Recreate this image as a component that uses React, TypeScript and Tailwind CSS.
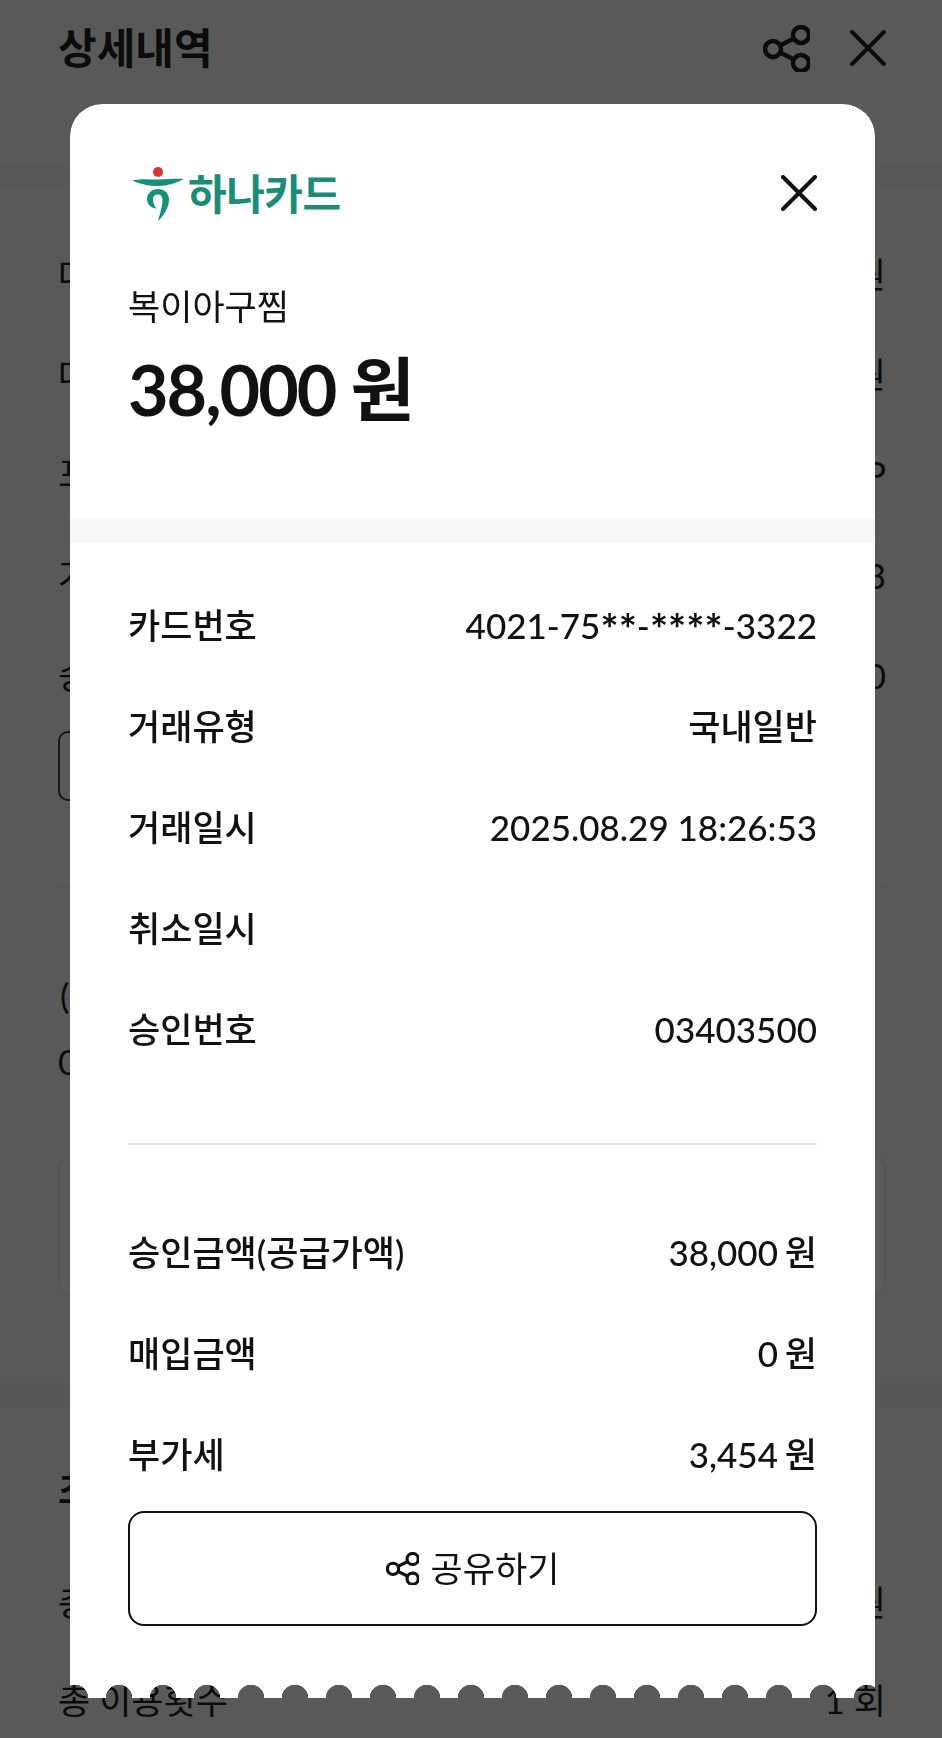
const detailRows = [
  { label: '카드번호', value: <>4021-75<span className="font-['Inter',sans-serif]">**</span>-<span className="font-['Inter',sans-serif]">****</span>-3322</> },
  { label: '거래유형', value: '국내일반' },
  { label: '거래일시', value: '2025.08.29 18:26:53' },
  { label: '취소일시', value: '' },
  { label: '승인번호', value: '03403500' },
];

const amountRows = [
  { label: '승인금액(공급가액)', value: '38,000 원' },
  { label: '매입금액', value: '0 원' },
  { label: '부가세', value: '3,454 원' },
];

const backRows = [
  { label: '대금', value: '38,000 원', className: 'h-[103px]' },
  { label: '대금', value: '0 원', className: 'h-[97px]' },
  { label: '포인트', value: '0 P', className: 'h-[100px]' },
  { label: '거래일시', value: '2025.08.29 18:26:53', className: 'h-[105px]' },
  { label: '승인번호', value: '03403500', className: 'h-[95px]' },
];

function ShareIcon({ className }: { className: string }) {
  return (
    <svg viewBox="0 0 47 47" fill="none" stroke="currentColor" strokeWidth="4.500" className={className}>
      <circle cx="10" cy="24" r="8" />
      <circle cx="38" cy="10" r="8" />
      <circle cx="38" cy="38" r="8" />
      <path d="M17 20.500 31 13.500M17 27.500 31 34.500" />
    </svg>
  );
}

function CloseIcon({ className }: { className: string }) {
  return (
    <svg viewBox="0 0 36 36" fill="none" stroke="currentColor" strokeWidth="4" strokeLinecap="round" className={className}>
      <path d="M2 2 34 34M34 2 2 34" />
    </svg>
  );
}

function HanaLogo() {
  return (
    <div className="flex items-center gap-[4px]">
      <svg viewBox="0 0 52 56" className="h-[56px] w-[52px]">
        <circle cx="26" cy="6" r="5" fill="#e0322d" />
        <path d="M0 14.500C9 12.500 18 13.500 26 13.500 35 13.500 43 12.500 52 13 44 17 36 20 26 20 16 20 8 18 0 14.500Z" fill="#15907a" />
        <path
          d="M26 23C19.500 23 15 27.500 15 33 15 38.500 19.500 42.500 24.500 42.500 22.500 40.500 21 37 21 33.500 21 30 23 28.500 26 28.500 29 28.500 30.500 31 30.500 34 30.500 39 28.500 46 26 55 32.500 49 37 41 37 33.500 37 27.500 32.500 23 26 23Z"
          fill="#15907a"
        />
      </svg>
      <span className="text-[42px] leading-none font-semibold tracking-[-0.5px] text-[#1a8c78]">하나카드</span>
    </div>
  );
}

export default function App() {
  return (
    <div className="relative h-[1738px] overflow-hidden bg-[#595959] font-['Lato','Noto_Sans_CJK_KR',sans-serif] text-[35px] text-[#0b0b0b]">
      {/* 뒤쪽 상세내역 화면 */}
      <header className="flex h-[96px] items-center justify-between pr-[56px] pl-[58px]">
        <h1 className="text-[42px] leading-none font-bold">상세내역</h1>
        <div className="flex items-center gap-[40px]">
          <ShareIcon className="h-[47px] w-[47px]" />
          <CloseIcon className="h-[36px] w-[36px]" />
        </div>
      </header>
      <div className="mt-[67px] h-[24px] bg-[#575757]" />

      <div className="pr-[56px] pl-[58px] pt-[36px]">
        {backRows.map((row) => (
          <div key={row.value} className={`flex items-center justify-between ${row.className}`}>
            <span>{row.label}</span>
            <span>{row.value}</span>
          </div>
        ))}
        <div className="mt-[8px] h-[70px] w-[400px] rounded-[10px] border-2 border-[#161616]" />
        <div className="mt-[86px] h-[1px] bg-[#535353]" />
        <p className="mt-[80px] pl-[2px] leading-[54px]">(주)복이아구찜</p>
        <p className="mt-[12px] leading-[54px]">02-000-0000</p>
        <div className="mt-[67px] h-[141px] rounded-[14px] border-2 border-[#555555] bg-[#5b5b5b]" />
      </div>

      <div className="mt-[87px] h-[24px] bg-[#565656]" />

      <div className="pr-[56px] pl-[58px]">
        <h2 className="mt-[60px] text-[36px] leading-[46px] font-bold">조회 내역</h2>
        <div className="mt-[64px] flex h-[50px] items-center justify-between">
          <span>총 이용금액</span>
          <span>38,000 원</span>
        </div>
        <div className="mt-[48px] flex h-[50px] items-center justify-between">
          <span>총 이용횟수</span>
          <span>1 회</span>
        </div>
      </div>

      {/* 영수증 모달 */}
      <div className="absolute top-[104px] left-[70px] flex h-[1594px] w-[805px] flex-col rounded-t-[32px] bg-white text-[#111111] [mask:linear-gradient(#000_0_0)_0_0/100%_calc(100%-13px)_no-repeat,radial-gradient(circle_at_22px_13px,transparent_13px,#000_13.5px)_-17px_100%/44px_13px_repeat-x]">
        <div className="px-[58px] pt-[62px]">
          <div className="flex items-start justify-between">
            <div className="ml-[4px]">
              <HanaLogo />
            </div>
            <CloseIcon className="mt-[9px] h-[36px] w-[36px]" />
          </div>
          <p className="mt-[60px] leading-[48px]">복이아구찜</p>
          <p className="mt-[17px] text-[70px] leading-[84px] font-bold tracking-[-2px]">38,000 원</p>
        </div>

        <div className="mt-[87px] h-[25px] bg-[#f6f6f6]" />

        <div className="px-[58px] pt-[32px] font-medium">
          {detailRows.map((row) => (
            <div key={row.label} className="flex h-[101px] items-center justify-between">
              <span>{row.label}</span>
              <span>{row.value}</span>
            </div>
          ))}
          <div className="mt-[63px] h-[2px] bg-[#e5e5e5]" />
          <div className="pt-[57px]">
            {amountRows.map((row) => (
              <div key={row.label} className="flex h-[101px] items-center justify-between">
                <span>{row.label}</span>
                <span className="[word-spacing:-2px]">{row.value}</span>
              </div>
            ))}
          </div>
          <button className="mt-[6px] flex h-[115px] w-full items-center justify-center gap-[12px] rounded-[16px] border-2 border-[#111111]">
            <ShareIcon className="h-[33px] w-[33px]" />
            <span className="font-normal">공유하기</span>
          </button>
        </div>
      </div>
    </div>
  );
}
